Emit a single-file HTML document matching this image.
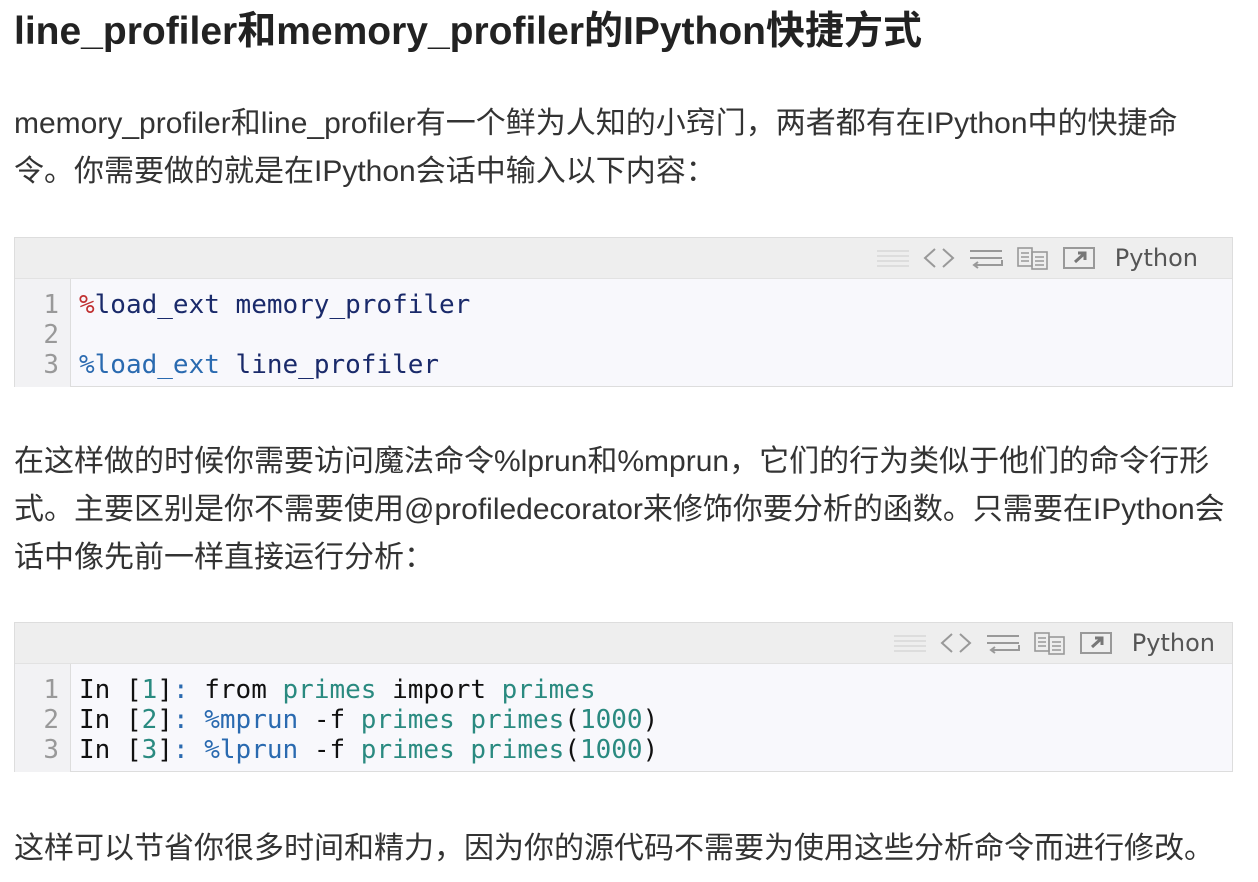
<!DOCTYPE html>
<html><head><meta charset="utf-8"><style>
body{margin:0;background:#fff;width:1258px;height:882px;overflow:hidden;font-family:"Liberation Sans","Noto Sans CJK SC",sans-serif;color:#333}
h1{position:absolute;left:14px;top:8px;margin:0;font-size:39px;line-height:48px;font-weight:bold;color:#222;white-space:nowrap}
p{position:absolute;left:14px;margin:0;font-size:30px;line-height:48px;white-space:nowrap;color:#333}
.box{position:absolute;left:14px;width:1217px;border:1px solid #ddd;background:#f8f8fc}
.bar{height:40px;background:#eee;border-bottom:1px solid #e2e2e2;position:relative}
.bar .ic{position:absolute;top:0;right:34px;height:40px;display:flex;align-items:center;gap:14px;color:#999}
.bar .lang{font-family:"DejaVu Sans",sans-serif;font-size:24px;color:#555;margin-left:6px}
.code{position:relative;font-family:"DejaVu Sans Mono",monospace;font-size:26px;line-height:30px;padding:11px 0 7px}
.gut{position:absolute;left:0;top:0;bottom:0;width:55px;border-right:1px solid #ddd;background:#f2f2f4}
.ln{position:relative;display:flex}
.n{width:44px;text-align:right;color:#999;padding-right:11px}
.c{padding-left:9px;color:#111}
.r{color:#c03030}.nv{color:#1a2a6a}.b{color:#2a6ab0}.g{color:#2a8a80}
</style></head><body>
<h1>line_profiler和memory_profiler的IPython快捷方式</h1>
<p style="top:100px">memory_profiler和line_profiler有一个鲜为人知的小窍门，两者都有在IPython中的快捷命</p>
<p style="top:148px">令。你需要做的就是在IPython会话中输入以下内容：</p>

<div class="box" style="top:237px;height:148px">
<div class="bar"><div class="ic">
<svg width="32" height="22"><g stroke="#ddd" stroke-width="2"><line x1="0" y1="4" x2="32" y2="4"/><line x1="0" y1="9" x2="32" y2="9"/><line x1="0" y1="14" x2="32" y2="14"/><line x1="0" y1="19" x2="32" y2="19"/></g></svg>
<svg width="32" height="24" fill="none" stroke="#999" stroke-width="2"><path d="M12 3L2 12L12 21M20 3L30 12L20 21"/></svg>
<svg width="34" height="24" fill="none" stroke="#999" stroke-width="2"><path d="M1 5H33M1 12H33M33 14V19H6M9 16L5 19L9 22"/></svg>
<svg width="32" height="24" fill="none" stroke="#999" stroke-width="1.6"><rect x="1" y="2" width="14" height="18"/><rect x="15" y="6" width="15" height="17"/><path d="M4 7H12M4 11H12M4 15H12M18 11H27M18 15H27M18 19H27"/></svg>
<svg width="32" height="24" fill="none" stroke="#999" stroke-width="2"><rect x="1" y="2" width="30" height="20"/><path d="M12 16L22 7M15 7H22V14" fill="none" stroke="#777" stroke-width="3"/></svg>
<span class="lang">Python</span></div></div>
<div class="code"><div class="gut"></div>
<div class="ln"><span class="n">1</span><span class="c"><span class="r">%</span><span class="nv">load_ext memory_profiler</span></span></div>
<div class="ln"><span class="n">2</span><span class="c"></span></div>
<div class="ln"><span class="n">3</span><span class="c"><span class="b">%load_ext</span> <span class="nv">line_profiler</span></span></div>
</div></div>

<p style="top:438px">在这样做的时候你需要访问魔法命令%lprun和%mprun，它们的行为类似于他们的命令行形</p>
<p style="top:486px">式。主要区别是你不需要使用@profiledecorator来修饰你要分析的函数。只需要在IPython会</p>
<p style="top:534px">话中像先前一样直接运行分析：</p>

<div class="box" style="top:622px;height:148px">
<div class="bar"><div class="ic" style="right:17px">
<svg width="32" height="22"><g stroke="#ddd" stroke-width="2"><line x1="0" y1="4" x2="32" y2="4"/><line x1="0" y1="9" x2="32" y2="9"/><line x1="0" y1="14" x2="32" y2="14"/><line x1="0" y1="19" x2="32" y2="19"/></g></svg>
<svg width="32" height="24" fill="none" stroke="#999" stroke-width="2"><path d="M12 3L2 12L12 21M20 3L30 12L20 21"/></svg>
<svg width="34" height="24" fill="none" stroke="#999" stroke-width="2"><path d="M1 5H33M1 12H33M33 14V19H6M9 16L5 19L9 22"/></svg>
<svg width="32" height="24" fill="none" stroke="#999" stroke-width="1.6"><rect x="1" y="2" width="14" height="18"/><rect x="15" y="6" width="15" height="17"/><path d="M4 7H12M4 11H12M4 15H12M18 11H27M18 15H27M18 19H27"/></svg>
<svg width="32" height="24" fill="none" stroke="#999" stroke-width="2"><rect x="1" y="2" width="30" height="20"/><path d="M12 16L22 7M15 7H22V14" fill="none" stroke="#777" stroke-width="3"/></svg>
<span class="lang">Python</span></div></div>
<div class="code"><div class="gut"></div>
<div class="ln"><span class="n">1</span><span class="c">In [<span class="g">1</span>]<span class="b">:</span> from <span class="g">primes</span> import <span class="g">primes</span></span></div>
<div class="ln"><span class="n">2</span><span class="c">In [<span class="g">2</span>]<span class="b">:</span> <span class="b">%mprun</span> -f <span class="g">primes primes</span>(<span class="g">1000</span>)</span></div>
<div class="ln"><span class="n">3</span><span class="c">In [<span class="g">3</span>]<span class="b">:</span> <span class="b">%lprun</span> -f <span class="g">primes primes</span>(<span class="g">1000</span>)</span></div>
</div></div>

<p style="top:825px">这样可以节省你很多时间和精力，因为你的源代码不需要为使用这些分析命令而进行修改。</p>
</body></html>
